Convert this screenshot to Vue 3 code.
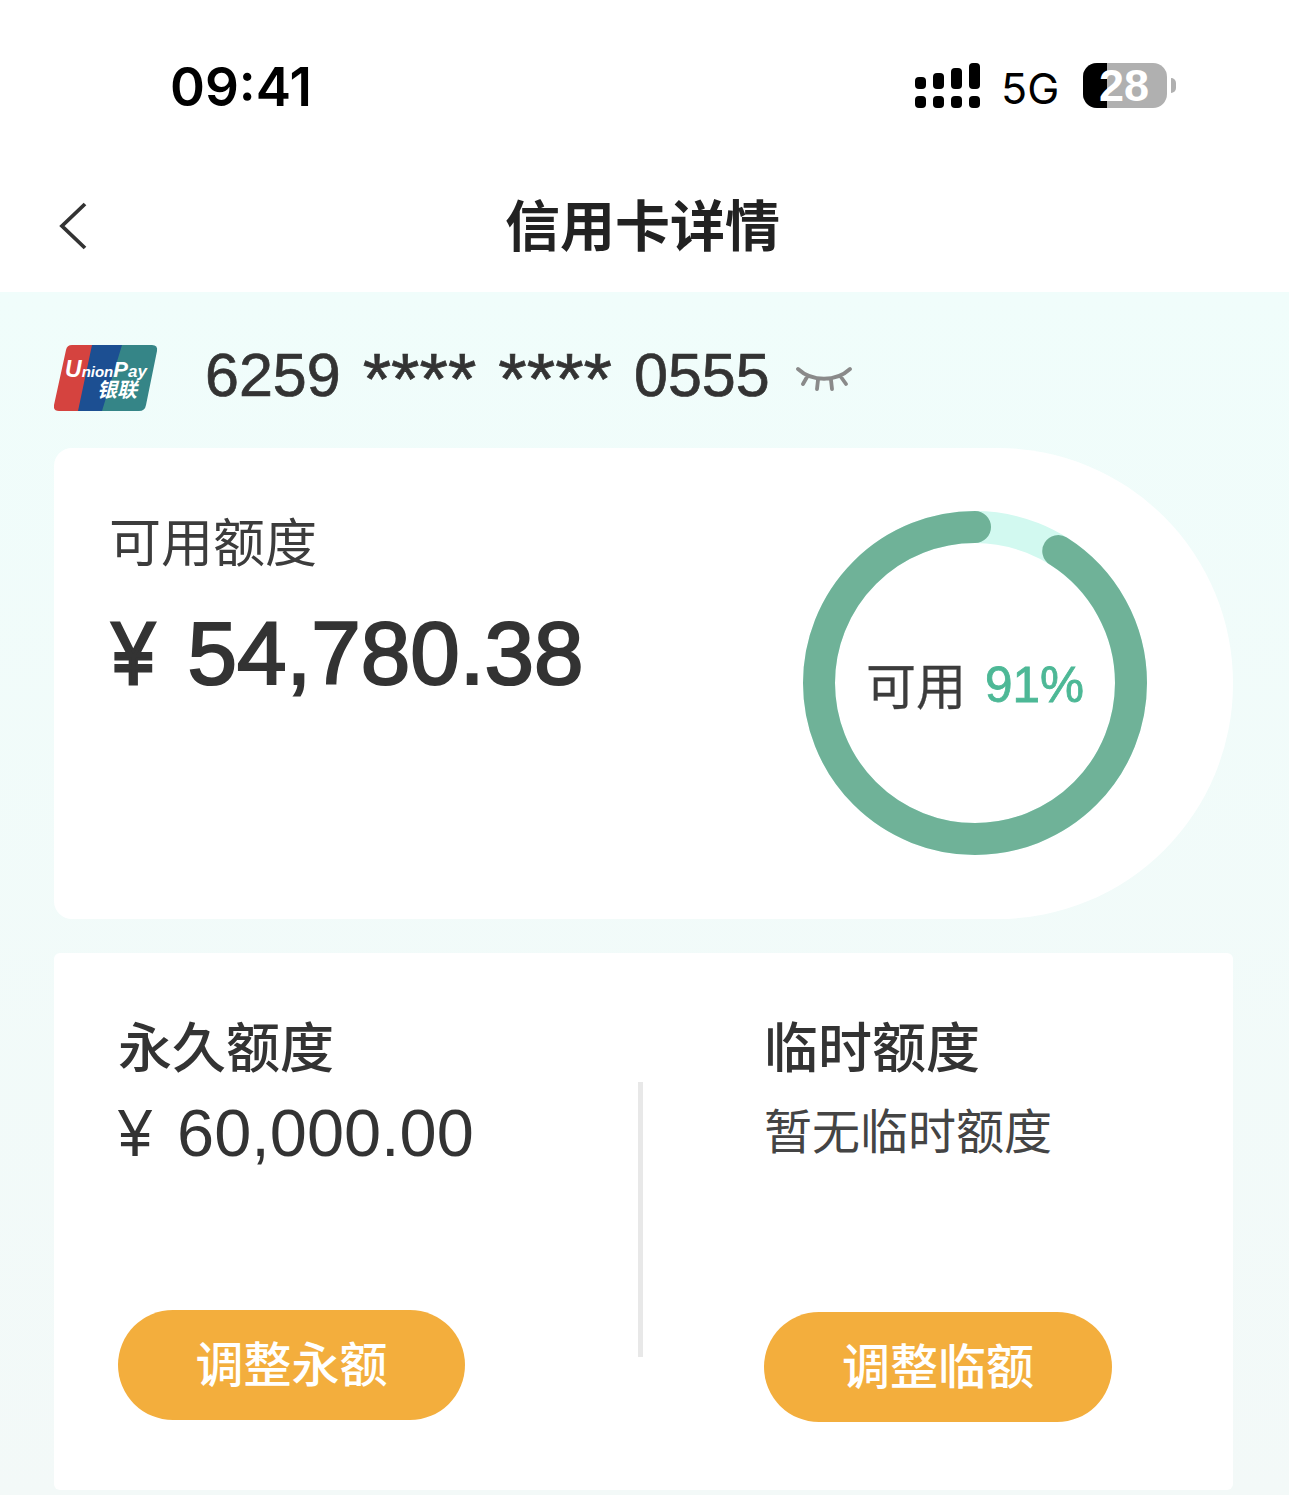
<script setup>
import { computed } from 'vue'

const percent = 91
const radius = 156
const circumference = 2 * Math.PI * radius
const ringDash = computed(() => {
  const used = (circumference * percent) / 100
  return used + ' ' + (circumference - used)
})
const signalBars = [12, 16, 21, 26]
</script>

<template>
  <div class="page">
    <div class="status-bar">
      <span class="time">09:41</span>
      <div class="status-icons">
        <div class="signal">
          <div v-for="h in signalBars" :key="h" class="signal-col">
            <i :style="{ height: h + 'px' }"></i>
            <i class="dot"></i>
          </div>
        </div>
        <span class="network">5G</span>
        <div class="battery">
          <div class="battery-body">
            <div class="battery-fill"></div>
            <span class="battery-num">28</span>
          </div>
          <div class="battery-tip"></div>
        </div>
      </div>
    </div>

    <div class="nav">
      <svg class="back" width="30" height="48" viewBox="0 0 30 48">
        <path d="M27 2 L4 24 L27 46" fill="none" stroke="#333" stroke-width="3.8" />
      </svg>
      <h1>信用卡详情</h1>
    </div>

    <div class="content">
      <div class="card-row">
        <svg class="unionpay" width="104" height="66" viewBox="0 0 104 66">
          <path d="M18 0 H40 Q46 0 45 4 L30 66 H5 Q-1 66 0 60 L12 5 Q13 0 18 0Z" fill="#d5433f" />
          <path d="M38 0 H72 L54 66 H24 Z" fill="#1c4f92" />
          <path d="M68 0 H98 Q104 0 103 6 L92 60 Q91 66 85 66 H48 Z" fill="#358587" />
          <text class="up-latin" x="11" y="32"><tspan font-size="23">U</tspan><tspan font-size="15">nion</tspan><tspan font-size="22">P</tspan><tspan font-size="17">ay</tspan></text>
          <text class="up-cn" x="43" y="52">银联</text>
        </svg>
        <div class="card-number">
          <span>6259</span>
          <span class="stars">****</span>
          <span class="stars">****</span>
          <span>0555</span>
        </div>
        <svg class="eye" width="58" height="28" viewBox="0 0 58 28">
          <path d="M2 4 C16 17 40 17 54 4 M11 12 L7 19 M22 15 L21 24 M35 15 L36 24 M45 12 L50 19" fill="none" stroke="#8a8a8a" stroke-width="3.8" stroke-linecap="round" />
        </svg>
      </div>

      <div class="available">
        <div class="available-text">
          <div class="available-label">可用额度</div>
          <div class="available-amount"><span class="yen">¥</span>54,780.38</div>
        </div>
        <div class="ring">
          <svg width="344" height="344" viewBox="0 0 344 344">
            <circle cx="172" cy="172" :r="radius" fill="none" stroke="#d2f9f0" stroke-width="32" />
            <circle
              cx="172"
              cy="172"
              :r="radius"
              fill="none"
              stroke="#6fb298"
              stroke-width="32"
              stroke-linecap="round"
              :stroke-dasharray="ringDash"
              transform="rotate(-90 172 172) scale(1 -1) translate(0 -344)"
            />
          </svg>
          <div class="ring-label">可用<span>{{ percent }}%</span></div>
        </div>
      </div>

      <div class="limits">
        <div class="limit limit-left">
          <div class="limit-title">永久额度</div>
          <div class="limit-amount"><span class="yen-small">¥</span>60,000.00</div>
          <button class="adjust">调整永额</button>
        </div>
        <div class="divider"></div>
        <div class="limit limit-right">
          <div class="limit-title">临时额度</div>
          <div class="limit-none">暂无临时额度</div>
          <button class="adjust">调整临额</button>
        </div>
      </div>
    </div>
  </div>
</template>

<style>
html,
body {
  margin: 0;
  background: #fff;
}
</style>

<style scoped>
.page {
  width: 1289px;
  height: 1495px;
  overflow: hidden;
  background: #fff;
  font-family: "Liberation Sans", "Noto Sans CJK SC", sans-serif;
  color: #333;
}
.status-bar {
  height: 172px;
  box-sizing: border-box;
  padding: 57px 113px 0 170px;
  display: flex;
  justify-content: space-between;
  align-items: flex-start;
}
.time {
  font-family: Inter, "Liberation Sans", sans-serif;
  font-size: 53px;
  font-weight: 600;
  line-height: 60px;
  color: #000;
}
.status-icons {
  display: flex;
  align-items: flex-start;
  padding-top: 6px;
}
.signal {
  display: flex;
  gap: 7px;
  height: 45px;
  align-items: flex-end;
}
.signal-col {
  display: flex;
  flex-direction: column;
  gap: 7px;
  width: 11px;
}
.signal-col i {
  display: block;
  background: #000;
  border-radius: 4px;
}
.signal-col .dot {
  height: 12px;
}
.network {
  margin-left: 21px;
  width: 82px;
  font-family: Inter, "Liberation Sans", sans-serif;
  font-size: 43px;
  line-height: 50px;
  color: #000;
}
.battery {
  display: flex;
  align-items: center;
  gap: 4px;
}
.battery-body {
  position: relative;
  width: 84px;
  height: 45px;
  border-radius: 14px;
  background: #b0b0b0;
}
.battery-fill {
  width: 24px;
  height: 100%;
  background: #000;
  border-radius: 14px 0 0 14px;
}
.battery-num {
  position: absolute;
  left: 16px;
  top: 0;
  font-family: "Liberation Sans", sans-serif;
  font-size: 45px;
  font-weight: 700;
  line-height: 45px;
  color: #fff;
}
.battery-tip {
  width: 5px;
  height: 15px;
  background: #b0b0b0;
  border-radius: 0 5px 5px 0;
}
.nav {
  height: 120px;
  position: relative;
  display: flex;
  align-items: center;
  justify-content: center;
  padding-right: 4px;
}
.back {
  position: absolute;
  left: 58px;
  top: 30px;
}
.nav h1 {
  margin: 0 0 20px 0;
  font-size: 55px;
  font-weight: 700;
  color: #222;
  font-family: "Noto Sans CJK SC", sans-serif;
  line-height: 64px;
}
.content {
  height: 1203px;
  box-sizing: border-box;
  padding: 0 56px 0 54px;
  background: linear-gradient(180deg, #f0fdfb 0%, #f3f9f8 100%);
}
.card-row {
  height: 156px;
  display: flex;
  align-items: center;
  padding-top: 16px;
  box-sizing: border-box;
}
.unionpay {
  flex: none;
}
.up-latin {
  font-family: "Liberation Sans", sans-serif;
  font-weight: 700;
  font-style: italic;
  fill: #fff;
}
.up-cn {
  font-family: "Noto Sans CJK SC", sans-serif;
  font-size: 20px;
  font-weight: 700;
  font-style: italic;
  fill: #fff;
}
.card-number {
  margin-left: 47px;
  margin-top: -2px;
  font-size: 61px;
  line-height: 70px;
  color: #333;
  display: flex;
  align-items: flex-start;
  gap: 22px;
  -webkit-text-stroke: 0.7px #333;
}
.stars {
  font-size: 73px;
  line-height: 70px;
  margin-top: 4px;
}
.eye {
  margin-left: 26px;
  margin-top: 2px;
}
.available {
  height: 471px;
  background: #fff;
  border-radius: 18px 235px 235px 18px;
  display: flex;
  justify-content: space-between;
  box-sizing: border-box;
  padding: 63px 86px 0 55px;
}
.available-label {
  font-size: 52px;
  line-height: 64px;
  color: #3c3c3c;
  padding-top: 1px;
}
.available-amount {
  margin-top: 27px;
  font-size: 89px;
  line-height: 100px;
  color: #333;
  display: flex;
  align-items: center;
  -webkit-text-stroke: 2.2px #333;
}
.yen {
  margin-left: 3px;
  margin-right: 26px;
  transform: scaleX(0.86);
  transform-origin: left center;
  -webkit-text-stroke: 3px #333;
}
.ring {
  position: relative;
  width: 344px;
  height: 344px;
}
.ring-label {
  position: absolute;
  inset: 0;
  display: flex;
  align-items: center;
  justify-content: center;
  font-size: 50px;
  color: #3c3c3c;
  -webkit-text-stroke: 0.3px #3c3c3c;
}
.ring-label span {
  margin-left: 19px;
  margin-top: 2px;
  font-size: 49.5px;
  color: #4db896;
  -webkit-text-stroke: 0.8px #4db896;
}
.limits {
  margin-top: 34px;
  height: 537px;
  background: #fff;
  border-radius: 6px;
  display: flex;
  box-sizing: border-box;
}
.limit {
  display: flex;
  flex-direction: column;
  align-items: flex-start;
}
.limit-left {
  width: 584px;
  padding: 60px 0 0 64px;
  box-sizing: border-box;
}
.limit-right {
  padding: 60px 0 0 121px;
}
.divider {
  width: 5px;
  height: 275px;
  margin-top: 129px;
  background: #e8e8e8;
}
.limit-title {
  font-size: 54px;
  font-weight: 500;
  line-height: 64px;
  color: #333;
  font-family: "Noto Sans CJK SC", sans-serif;
}
.limit-amount {
  margin-top: 20px;
  font-size: 66.7px;
  line-height: 72px;
  color: #333;
  display: flex;
  align-items: center;
}
.yen-small {
  margin-right: 22px;
  transform: scaleX(0.92);
  transform-origin: left center;
}
.limit-none {
  margin-top: 20px;
  font-size: 48px;
  line-height: 72px;
  color: #444;
}
.adjust {
  margin-top: 141px;
  width: 347px;
  height: 110px;
  border: 0;
  border-radius: 55px;
  background: #f3ae3d;
  color: #fff;
  font-family: "Noto Sans CJK SC", sans-serif;
  font-size: 48px;
  font-weight: 500;
  padding: 0 0 8px;
}
.limit-right .adjust {
  margin-top: 143px;
  width: 348px;
}
</style>
